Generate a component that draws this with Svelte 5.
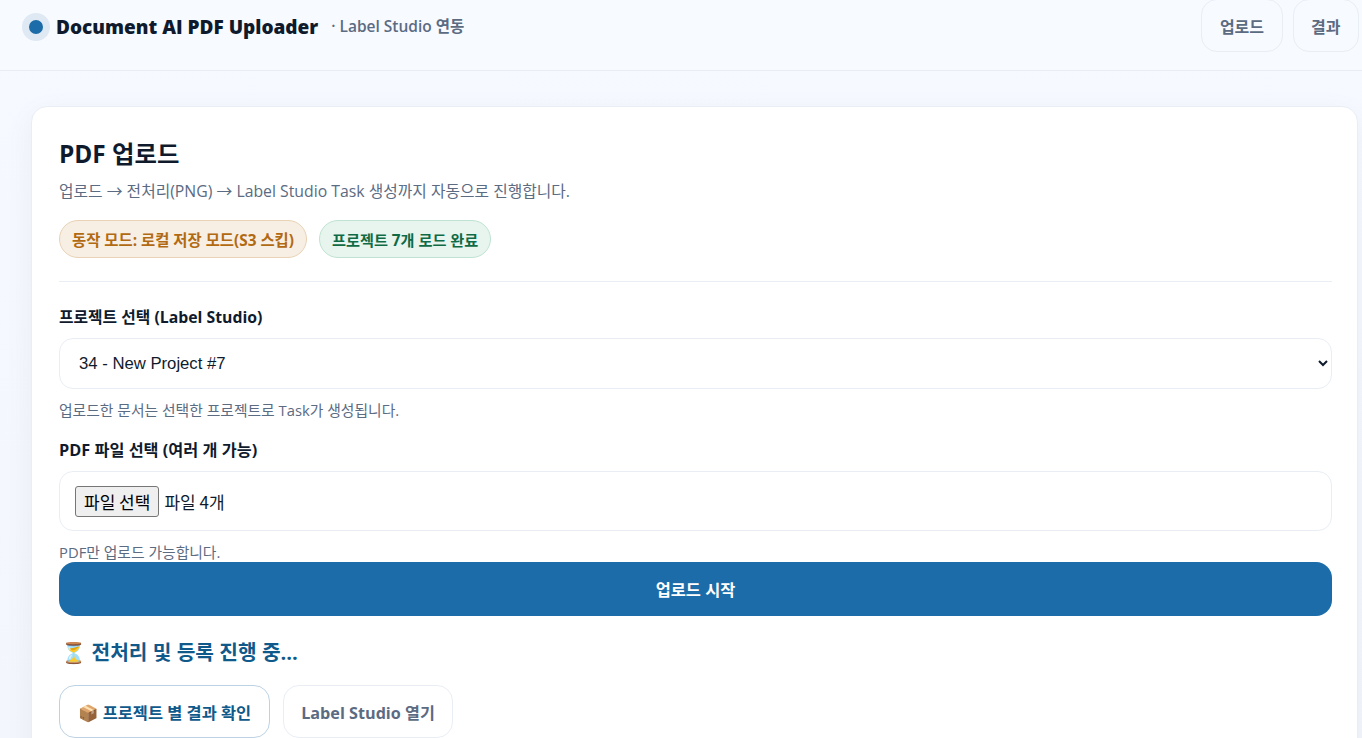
<script lang="ts">
  let projects = ['34 - New Project #7'];
  let selected = $state(projects[0]);
</script>

<div class="page">
  <header class="topbar">
    <div class="brand">
      <span class="dot"></span>
      <strong class="brand-name">Document AI PDF Uploader</strong>
      <span class="brand-sub">· Label Studio 연동</span>
    </div>
    <nav class="nav">
      <button class="nav-btn">업로드</button>
      <button class="nav-btn">결과</button>
    </nav>
  </header>

  <main class="main">
    <section class="card">
      <h1>PDF 업로드</h1>
      <p class="lead">업로드 → 전처리(PNG) → Label Studio Task 생성까지 자동으로 진행합니다.</p>

      <div class="badges">
        <span class="badge warn">동작 모드: 로컬 저장 모드(S3 스킵)</span>
        <span class="badge ok">프로젝트 7개 로드 완료</span>
      </div>

      <hr />

      <label class="field-label" for="project">프로젝트 선택 (Label Studio)</label>
      <select id="project" class="select" bind:value={selected}>
        {#each projects as p}
          <option value={p}>{p}</option>
        {/each}
      </select>
      <p class="hint">업로드한 문서는 선택한 프로젝트로 Task가 생성됩니다.</p>

      <div class="field-label second">PDF 파일 선택 (여러 개 가능)</div>
      <div class="file-box">
        <span class="file-btn">파일 선택</span>
        <span class="file-count">파일 4개</span>
      </div>
      <p class="hint tight">PDF만 업로드 가능합니다.</p>

      <button class="primary">업로드 시작</button>

      <div class="status"><span class="emoji">⏳</span> 전처리 및 등록 진행 중...</div>

      <div class="actions">
        <button class="action outlined"><span class="emoji">📦</span> 프로젝트 별 결과 확인</button>
        <button class="action">Label Studio 열기</button>
      </div>
    </section>
  </main>
</div>

<style>
  :global(html), :global(body) {
    margin: 0;
    height: 100%;
    overflow: hidden;
  }

  :global(body) {
    background: linear-gradient(#f6f9ff, #f3f6fc);
    font-family: "Open Sans", "Noto Sans CJK KR", sans-serif;
    color: #0f1b2d;
  }

  .page {
    height: 738px;
    overflow: hidden;
  }

  /* Top bar */
  .topbar {
    height: 70px;
    display: flex;
    justify-content: space-between;
    align-items: flex-start;
    padding: 0 3px 0 22px;
    background: #f7faff;
    border-bottom: 1px solid #e8edf4;
  }

  .brand {
    display: flex;
    align-items: center;
    height: 53px;
  }

  .dot {
    width: 14px;
    height: 14px;
    border-radius: 50%;
    background: #1b6ca8;
    border: 7px solid #dfe9f4;
    margin-right: 6px;
  }

  .brand-name {
    font-size: 19px;
    font-weight: 800;
    color: #0f1b2d;
  }

  .brand-sub {
    margin-left: 13px;
    margin-top: -3px;
    font-size: 15.5px;
    font-weight: 600;
    color: #5b6b82;
  }

  .nav {
    display: flex;
    gap: 10px;
    margin-top: -1px;
  }

  .nav-btn {
    height: 53px;
    padding: 0 17.5px;
    border: 1px solid #e9eef5;
    border-radius: 16px;
    background: transparent;
    font: inherit;
    font-size: 16px;
    font-weight: 700;
    color: #5b6b82;
  }

  /* Main card */
  .main {
    padding: 35px 4px 0 31px;
  }

  .card {
    background: #fff;
    border: 1px solid #e9eef5;
    border-radius: 16px;
    padding: 31px 25px 0 27px;
    height: 700px;
    box-shadow: 0 8px 30px rgba(15, 27, 45, 0.05);
  }

  h1 {
    margin: 0;
    font-size: 24.4px;
    line-height: 32px;
    font-weight: 700;
    color: #0f1b2d;
  }

  .lead {
    margin: 11px 0 0;
    font-size: 15.8px;
    line-height: 20px;
    color: #5b6b82;
  }

  .badges {
    display: flex;
    gap: 12px;
    margin-top: 19px;
  }

  .badge {
    height: 36px;
    display: flex;
    align-items: center;
    padding: 0 12px;
    border-radius: 19px;
    font-size: 15.2px;
    font-weight: 700;
  }

  .badge.warn {
    background: #f7efe4;
    border: 1px solid #e9d2b5;
    color: #b26a12;
    font-size: 15.4px;
  }

  .badge.ok {
    background: #e7f5ee;
    border: 1px solid #bfe3d2;
    color: #0f6b45;
  }

  hr {
    border: 0;
    border-top: 1px solid #e9eef5;
    margin: 23px 0 0;
  }

  .field-label {
    display: block;
    margin-top: 25px;
    font-size: 15.8px;
    line-height: 20px;
    font-weight: 700;
    color: #0f1b2d;
  }

  .field-label.second {
    margin-top: 20px;
    font-size: 16.3px;
  }

  .select {
    display: block;
    width: 100%;
    height: 51px;
    margin-top: 11px;
    padding: 0 15px;
    background: #fff;
    border: 1px solid #e9eef5;
    border-radius: 14px;
    font-family: "Liberation Sans", sans-serif;
    font-size: 16.7px;
    color: #0f1b2d;
  }

  .hint {
    margin: 11px 0 0;
    font-size: 14.8px;
    line-height: 20px;
    color: #5b6b82;
  }

  .hint.tight {
    height: 20px;
  }

  .file-box {
    display: flex;
    align-items: center;
    height: 58px;
    margin-top: 11px;
    padding: 0 15px;
    border: 1px solid #e9eef5;
    border-radius: 14px;
    font-family: "Noto Sans CJK KR", sans-serif;
    font-size: 17px;
    color: #0f1b2d;
  }

  .file-btn {
    height: 31px;
    box-sizing: border-box;
    display: flex;
    align-items: center;
    padding: 0 8px;
    background: #efefef;
    border: 1px solid #767676;
    border-radius: 3px;
    margin-right: 5px;
    color: #000;
  }

  .primary {
    display: block;
    width: 100%;
    height: 54px;
    border: 0;
    border-radius: 16px;
    background: #1b6ca8;
    color: #fff;
    font: inherit;
    font-size: 16.4px;
    font-weight: 700;
  }

  .status {
    margin-top: 23px;
    padding-left: 2px;
    font-size: 20.3px;
    line-height: 26px;
    font-weight: 700;
    color: #0f5a8a;
  }

  .emoji {
    font-family: "Noto Color Emoji", "Noto Sans CJK KR", sans-serif;
    font-weight: 400;
  }

  .actions {
    display: flex;
    gap: 13px;
    margin-top: 19px;
  }

  .action {
    height: 53px;
    padding: 0 17px;
    background: #fff;
    border: 1px solid #e9eef5;
    border-radius: 16px;
    font: inherit;
    font-size: 16.2px;
    font-weight: 700;
    color: #5b6b82;
  }

  .action.outlined {
    padding: 0 18px;
    font-size: 16.4px;
    border-color: #bdd2e4;
    color: #0f5a8a;
  }
</style>
